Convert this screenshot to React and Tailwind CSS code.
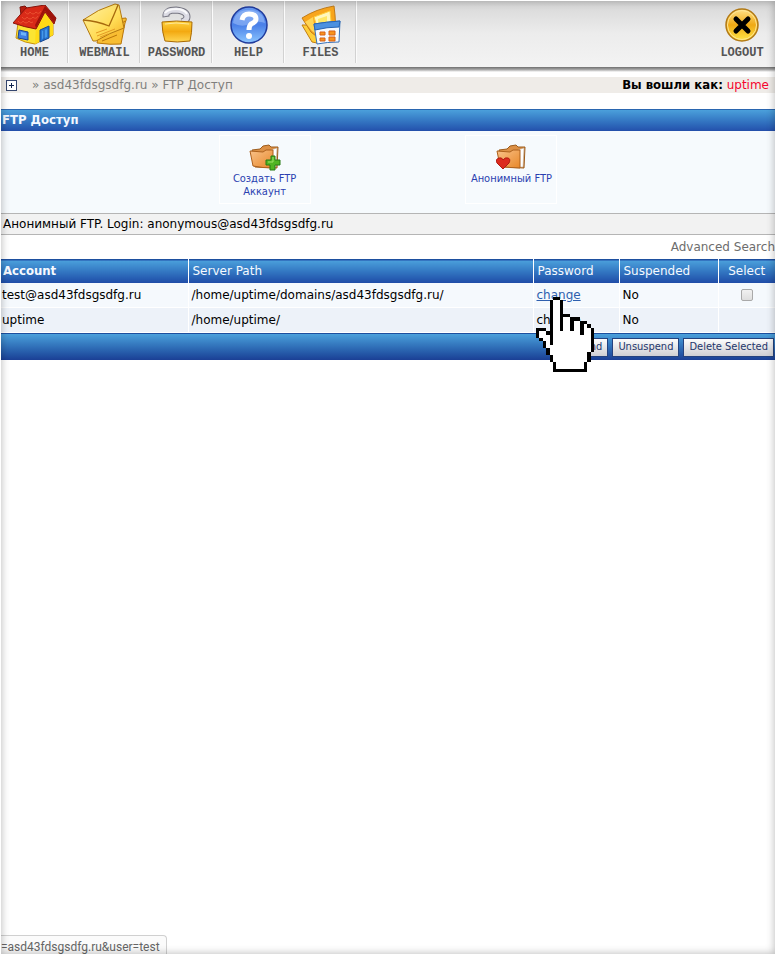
import React, { useState } from 'react';

const navItems = [
    { label: 'HOME', icon: HomeIcon },
    { label: 'WEBMAIL', icon: MailIcon },
    { label: 'PASSWORD', icon: LockIcon },
    { label: 'HELP', icon: HelpIcon },
    { label: 'FILES', icon: FilesIcon },
];

const accounts = [
    { name: 'test@asd43fdsgsdfg.ru', path: '/home/uptime/domains/asd43fdsgsdfg.ru/', suspended: 'No', hovered: true },
    { name: 'uptime', path: '/home/uptime/', suspended: 'No', hovered: false },
];

// # = outline, o = fill
const handPixels = [
    '.....##..........',
    '....#oo#.........',
    '....#oo#.........',
    '....#oo#.........',
    '....#oo#.........',
    '....#oo###.......',
    '....#oo#oo###....',
    '....#oo#oo#oo##..',
    '....#oo#oo#oo#o#.',
    '###.#oo#oo#oo#oo#',
    '#oo##oooooooo#oo#',
    '#ooo#ooooooooooo#',
    '.#oo#ooooooooooo#',
    '..#o#ooooooooooo#',
    '..#ooooooooooooo#',
    '...#oooooooooooo#',
    '...#ooooooooooo#.',
    '....#oooooooooo#.',
    '....#oooooooooo#.',
    '.....#oooooooo#..',
    '.....#oooooooo#..',
    '.....##########..',
];

function HomeIcon() {
    return (
        <svg viewBox="0 0 44 40" className="h-[40px] w-[44px]" aria-hidden="true">
            <path d="M5 18 L3 33 Q12 38 22 39 L40 30 L40 14 L28 7 Z" fill="#fbe433" stroke="#c9910c" />
            <path d="M23 21 L22 39 L40 30 L40 14 L31 6 Z" fill="#ffda17" />
            <path d="M7 2 L12 1 L14 3 L13 9 L8 10 Z" fill="#b81d10" stroke="#7c1108" />
            <path d="M13 3 L32 0 L43 13 L41 19 L32 7 L23 24 Q11 22 0 18 Z" fill="#d92a18" stroke="#8a140b" strokeLinejoin="round" />
            <path d="M32 1 L43 13 L41 18 L32 6 L23 23 L22 20 Z" fill="#9d130b" />
            <path d="M12 7 q3 4 5 0 q3 4 6 0 q3 3 5 -1 M9 12 q3 4 5 0 q3 4 6 0 q3 3 5 -1 M5 16 q3 4 5 0 q3 4 6 0 q2 3 4 1" fill="none" stroke="#ea5030" strokeWidth="1" />
            <path d="M6 25 L15 27 L15 35 L5 33 Z" fill="#3d7fe5" stroke="#1b4393" />
            <path d="M8 27 L13 28 L13 31 L8 30 Z" fill="#6fb4f7" />
            <path d="M27 25 L36 21 L36 33 L27 37 Z" fill="#2676d6" stroke="#174993" />
            <path d="M29 26 L34 24 V32 L29 34 Z" fill="#4599eb" />
            <path d="M31 25 V35" stroke="#1b55ab" />
        </svg>
    );
}

function MailIcon() {
    return (
        <svg viewBox="0 0 46 43" className="h-[43px] w-[46px]" aria-hidden="true">
            <defs>
                <linearGradient id="mail" x1="0" y1="0" x2="1" y2="1">
                    <stop offset="0" stopColor="#fff3a6" />
                    <stop offset="0.6" stopColor="#ffdc55" />
                    <stop offset="1" stopColor="#f4ab1d" />
                </linearGradient>
            </defs>
            <path d="M24 17 L44 15 Q45 16 43 20 L39 41 Q29 42 15 40 L18 25 Z" fill="#f8bd32" stroke="#b87508" />
            <path d="M25 31 L43 18 M20 38 L35 32" stroke="#b87508" />
            <path d="M1 17 Q16 6 33 1 L37 2 L42 25 Q27 30 14 38 L11 38 Z" fill="url(#mail)" stroke="#b37912" />
            <path d="M1 17 Q15 18 27 23 Q32 12 36 2" fill="none" stroke="#a7690d" strokeWidth="1.3" />
            <path d="M14 30 L25 26 M15 33 L33 26 M18 34 L26 31" stroke="#e59b24" />
        </svg>
    );
}

function LockIcon() {
    return (
        <svg viewBox="0 0 32 37" className="h-[37px] w-[32px]" aria-hidden="true">
            <defs>
                <linearGradient id="lock" x1="0" y1="0" x2="0" y2="1">
                    <stop offset="0" stopColor="#ffd33e" />
                    <stop offset="0.5" stopColor="#f3a911" />
                    <stop offset="1" stopColor="#ffd755" />
                </linearGradient>
            </defs>
            <path d="M5 11 Q4 4 15 4 Q26 5 26 11 Q26 14 21 16" fill="none" stroke="#777783" strokeWidth="7" />
            <path d="M5 10 Q4 4 15 4 Q26 5 26 11 Q26 14 21 16" fill="none" stroke="#dcdce5" strokeWidth="5" />
            <path d="M4 7 Q7 3 15 3 Q23 3 26 8" fill="none" stroke="#fafafc" strokeWidth="2" />
            <path d="M1 16 Q15 14 31 16 Q31 27 29 35 Q16 37 4 35 Q1 26 1 16 Z" fill="url(#lock)" stroke="#aa6b05" />
            <path d="M4 18 Q14 16 28 18" fill="none" stroke="#ffe897" />
        </svg>
    );
}

function HelpIcon() {
    return (
        <svg viewBox="0 0 38 38" className="h-[38px] w-[38px]" aria-hidden="true">
            <defs>
                <linearGradient id="help" x1="0" y1="0" x2="0" y2="1">
                    <stop offset="0" stopColor="#6a9bf2" />
                    <stop offset="0.5" stopColor="#4a80e8" />
                    <stop offset="1" stopColor="#8cc6ff" />
                </linearGradient>
            </defs>
            <circle cx="19" cy="19" r="18" fill="url(#help)" stroke="#203b9c" strokeWidth="1.5" />
            <path d="M3 17 Q5 4 19 4 Q33 4 35 17 Q26 14 19 18 Q12 22 3 17 Z" fill="#a6c6fa" opacity="0.5" />
            <path d="M12 14 Q13 8 19 8 Q26 8 26 13 Q26 16 21 18 Q19 20 19 24" fill="none" stroke="#fff" strokeWidth="5" />
            <circle cx="19" cy="30" r="3" fill="#fff" />
        </svg>
    );
}

function FilesIcon() {
    return (
        <svg viewBox="0 0 40 40" className="h-[40px] w-[40px]" aria-hidden="true">
            <path d="M1 20 L11 37 L16 38 L25 20 Z" fill="#ffcf39" stroke="#c27e12" />
            <path d="M1 13 Q15 4 33 1 L34 10 L35 28 L15 31 L10 27 Z" fill="#f8a51c" stroke="#c17b18" />
            <path d="M4 17 L12 12 L14 28 L11 26 Z" fill="#ffd554" />
            <path d="M13 12 L29 6 L30 16 L17 25 Z" fill="#fff7bd" stroke="#ffcf3b" />
            <path d="M17 14 L26 11 L26 18 L18 22 Z" fill="#ffe765" />
            <path d="M13 19 Q25 17 39 16 L38 37 Q26 37 16 39 Z" fill="#f5faff" stroke="#3971b8" />
            <path d="M13 19 Q25 17 39 16 L38 22 Q26 22 14 25 Z" fill="#4c91e0" stroke="#2865b4" />
            <path d="M19 27 h5 v3 h-5 Z M28 26 h6 v4 h-6 Z M19 33 h5 v3 h-5 Z M28 32 h6 v4 h-6 Z" fill="#f7941e" stroke="#d96017" />
        </svg>
    );
}

function LogoutIcon() {
    return (
        <svg viewBox="0 0 34 34" className="h-[34px] w-[34px]" aria-hidden="true">
            <defs>
                <linearGradient id="logout" x1="0" y1="0" x2="0" y2="1">
                    <stop offset="0" stopColor="#ffe28a" />
                    <stop offset="0.5" stopColor="#f0a914" />
                    <stop offset="1" stopColor="#ffe748" />
                </linearGradient>
            </defs>
            <circle cx="17" cy="17" r="16" fill="url(#logout)" stroke="#b27a16" strokeWidth="1.5" />
            <circle cx="17" cy="17" r="14.5" fill="none" stroke="#ffe694" />
            <path d="M11 11 L23 23 M23 11 L11 23" stroke="#000" strokeWidth="5" strokeLinecap="round" />
        </svg>
    );
}

function FolderIcon({ children }) {
    return (
        <>
            <defs>
                <linearGradient id="folder" x1="0" y1="0" x2="1" y2="1">
                    <stop offset="0" stopColor="#f9c28a" />
                    <stop offset="1" stopColor="#e88728" />
                </linearGradient>
            </defs>
            <path d="M3 6 L11 5 L14 2 L20 1 L22 3 L29 3 L28 24 L6 23 Z" fill="#dc9045" stroke="#9c5c1d" />
            <path d="M22 6 L28 4 L27 23 L21 23 Z" fill="#fff" stroke="#b4a798" strokeWidth="0.5" />
            <path d="M1 7 L14 8 L17 6 L24 6 L24 24 Q14 24 4 22 Z" fill="url(#folder)" stroke="#ad611d" />
            {children}
        </>
    );
}

function CreateFtpIcon() {
    return (
        <svg viewBox="0 0 32 28" className="h-[28px] w-[32px]" aria-hidden="true">
            <FolderIcon>
                <path d="M22 12 H26 V16 H31 V21 H26 V26 H21 V21 H17 V16 H22 Z" fill="#51b522" stroke="#277b12" />
                <path d="M24 13 V18 H19" fill="none" stroke="#a0e369" />
            </FolderIcon>
        </svg>
    );
}

function AnonymousFtpIcon() {
    return (
        <svg viewBox="0 0 30 28" className="h-[28px] w-[30px]" aria-hidden="true">
            <FolderIcon>
                <path d="M7 25 L1 19 Q-1 15 3 14 Q6 13 7 16 Q9 13 12 14 Q15 15 13 19 Z" fill="#dc2b1d" stroke="#b01b12" />
            </FolderIcon>
        </svg>
    );
}

function HandCursor() {
    return (
        <svg
            viewBox="0 0 17 22"
            preserveAspectRatio="none"
            shapeRendering="crispEdges"
            className="pointer-events-none absolute top-[14px] left-[2px] z-10 h-[75px] w-[58px]"
            aria-hidden="true"
        >
            {handPixels.map((row, y) =>
                row.split('').map((p, x) =>
                    p === '.' ? null : <rect key={`${x}-${y}`} x={x} y={y} width="1" height="1" fill={p === '#' ? '#000' : '#fff'} />
                )
            )}
        </svg>
    );
}

function NavLink({ label, icon: Icon }) {
    return (
        <a
            href="#"
            className="flex w-full flex-col items-center pt-[3px] font-['Liberation_Mono',monospace] text-[12px] leading-[14px] font-bold text-[#555]"
        >
            <span className="flex h-[43px] items-center">
                <Icon />
            </span>
            {label}
        </a>
    );
}

function ActionButton({ children }) {
    return (
        <button
            type="button"
            className="h-[19px] border border-[#24427f] bg-linear-to-b from-[#fdfdfd] to-[#cfcfd3] px-[5px] font-['DejaVu_Sans_Condensed','DejaVu_Sans',sans-serif] text-[11px] leading-4 text-[#25366b]"
        >
            {children}
        </button>
    );
}

const App = () => {
    const [selected, setSelected] = useState(false);

    const thClass = 'h-[23px] border-t border-t-[#1d4f9f] bg-linear-to-b from-[#4ba0db] to-[#1f4aa6] px-1 font-normal';

    return (
        <div className="relative flex min-h-screen flex-col bg-white px-px font-['DejaVu_Sans',sans-serif] text-[12px] leading-4 text-black">
            <nav className="flex h-[67px] justify-between bg-linear-to-b from-[#d6d6d6] via-[#ececec] to-[#f3f3f3]">
                <ul className="flex pb-1">
                    {navItems.map((item) => (
                        <li key={item.label} className="flex w-[72px] border-r border-[#fbfbfb] shadow-[inset_-1px_0_0_#d2d2d2] first:w-[68px]">
                            <NavLink {...item} />
                        </li>
                    ))}
                </ul>
                <div className="flex w-[66px]">
                    <NavLink label="LOGOUT" icon={LogoutIcon} />
                </div>
            </nav>
            <div className="h-[5px] bg-linear-to-b from-[#6f6f6f] via-[#a5a5a5] to-white" />

            <div className="mt-[5px] flex h-4 items-center justify-between bg-[#efece8] pr-[6px] pl-[5px]">
                <div className="flex items-center text-[#807f7d]">
                    <button type="button" aria-label="Expand" className="mr-[15px] flex h-[11px] w-[11px] items-center justify-center border border-[#35466f] bg-white">
                        <svg viewBox="0 0 7 7" className="h-[7px] w-[7px]" aria-hidden="true">
                            <path d="M1 3.5 H6 M3.5 1 V6" stroke="#10244f" strokeWidth="1" />
                        </svg>
                    </button>
                    <span>
                        » <a href="#">asd43fdsgsdfg.ru</a> » <a href="#">FTP Доступ</a>
                    </span>
                </div>
                <div>
                    <b className="font-['DejaVu_Sans_Condensed','DejaVu_Sans',sans-serif] text-[13px]">Вы вошли как:</b>{' '}
                    <span className="text-[#f5052f]">uptime</span>
                </div>
            </div>

            <h1 className="mt-4 h-[22px] border-t border-b border-t-[#2a66b0] border-b-[#2450ab] bg-linear-to-b from-[#4ba0db] to-[#2554ae] px-px font-['DejaVu_Sans_Condensed','DejaVu_Sans',sans-serif] text-[13px] leading-5 font-bold text-[#f3f8ff]">
                FTP Доступ
            </h1>
            <div className="flex h-[82px] justify-center gap-[20%] bg-[#f6fafd] pt-1 font-['DejaVu_Sans_Condensed','DejaVu_Sans',sans-serif] text-[11px] leading-[13px] text-[#2a3fb0]">
                <a href="#" className="flex h-[69px] w-[92px] flex-col items-center border border-white pt-2 text-center">
                    <CreateFtpIcon />
                    <span>Создать FTP Аккаунт</span>
                </a>
                <a href="#" className="flex h-[69px] w-[92px] flex-col items-center border border-white pt-2 text-center">
                    <AnonymousFtpIcon />
                    <span className="whitespace-nowrap">Анонимный FTP</span>
                </a>
            </div>
            <p className="h-[22px] border-t border-b border-[#b5b5b5] bg-[#f2f2f2] px-[2px] leading-5">
                Анонимный FTP. Login: anonymous@asd43fdsgsdfg.ru
            </p>
            <div className="flex h-[24px] items-center justify-end text-[#6d6d6d]">
                <a href="#">Advanced Search</a>
            </div>

            <table className="w-full table-fixed border-collapse">
                <thead className="text-[#f6faff]">
                    <tr className="divide-x divide-white">
                        <th className={`${thClass} w-[187px] text-left`}>
                            <b className="-ml-[2px] font-['DejaVu_Sans_Condensed','DejaVu_Sans',sans-serif] text-[13px]">Account</b>
                        </th>
                        <th className={`${thClass} text-left`}>Server Path</th>
                        <th className={`${thClass} w-[86px] text-left`}>Password</th>
                        <th className={`${thClass} w-[99px] text-left`}>Suspended</th>
                        <th className={`${thClass} w-[57px] text-center`}>Select</th>
                    </tr>
                </thead>
                <tbody>
                    {accounts.map((account) => (
                        <tr key={account.name} className="divide-x divide-white border-b border-white odd:bg-[#f5f9fd] even:bg-[#edf2f9]">
                            <td className="h-[25px] px-px">{account.name}</td>
                            <td className="px-[3px]">{account.path}</td>
                            <td className="relative px-[3px]">
                                <a href="#" className={account.hovered ? 'text-[#2e5fae] underline' : ''}>change</a>
                                {account.hovered && <HandCursor />}
                            </td>
                            <td className="px-[3px]">{account.suspended}</td>
                            <td className="text-center">
                                {account.hovered && (
                                    <input
                                        type="checkbox"
                                        aria-label={account.name}
                                        checked={selected}
                                        onChange={(e) => setSelected(e.target.checked)}
                                        className="h-3 w-3 appearance-none rounded-xs border border-[#a9a9a9] bg-linear-to-b from-[#f1f1f1] to-[#dedede] align-middle checked:bg-[#2e5fae]"
                                    />
                                )}
                            </td>
                        </tr>
                    ))}
                </tbody>
            </table>
            <div className="flex h-[27px] items-center justify-end gap-1 border-t border-[#1d4f9f] bg-linear-to-b from-[#4ba0db] to-[#1b3f95] pr-px">
                <ActionButton>Suspend</ActionButton>
                <ActionButton>Unsuspend</ActionButton>
                <ActionButton>Delete Selected</ActionButton>
            </div>

            <div className="mt-auto h-5 self-start rounded-tr-sm border-t border-r border-[#d0d0d0] bg-[#fbfbfb] pr-[6px] font-['Roboto',sans-serif] leading-[22px] text-[#666]">
                =asd43fdsgsdfg.ru&amp;user=test
            </div>

            {/* page edge shading */}
            <div className="pointer-events-none absolute inset-0 z-20 border border-white shadow-[inset_0_0_8px_rgba(0,0,0,0.3)]" />
        </div>
    );
};

export default App;
